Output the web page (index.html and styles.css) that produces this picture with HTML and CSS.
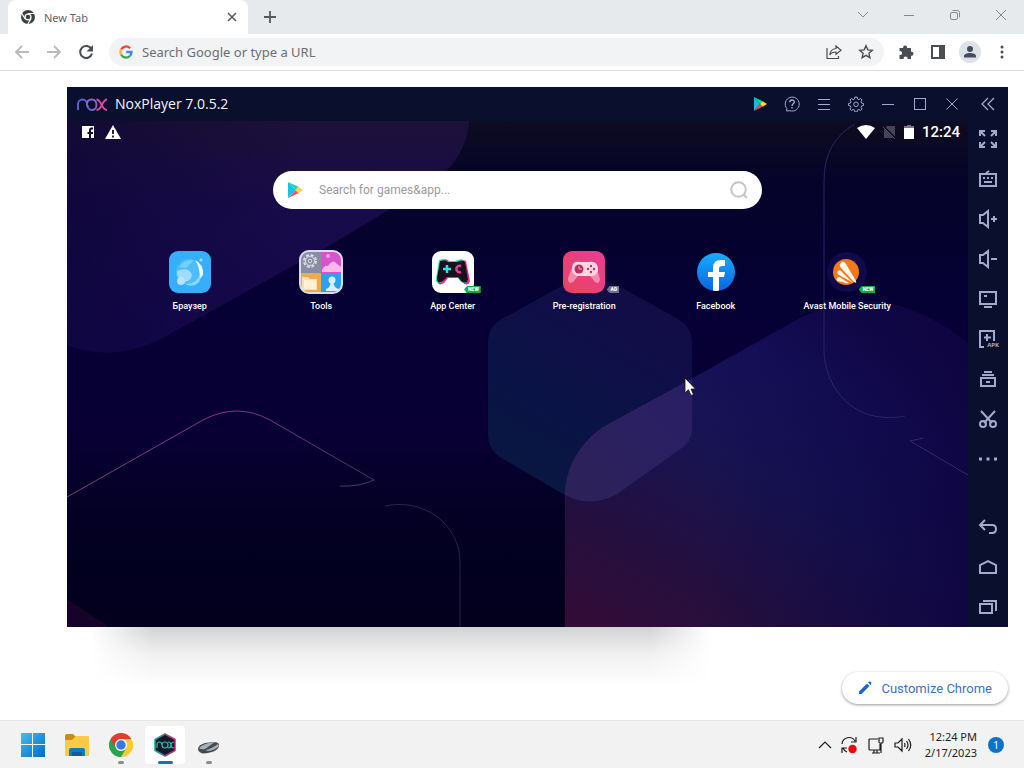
FILE: index.html
```html
<!DOCTYPE html>
<html lang="en">
<head>
  <meta charset="UTF-8" />
  <meta name="viewport" content="width=device-width, initial-scale=1.0"/>
  <title>New Tab</title>
  <link rel="stylesheet" href="styles.css">
</head>
<body>
  <header class="tabstrip">
    <div class="tab">
      <svg width="16" height="16" viewBox="0 0 16 16"><circle cx="8" cy="8" r="7" fill="#3c4043"/><path d="M8 4.500h6.500M5 9.800L1.700 4.200M11 9.800L7.800 15" stroke="#fff" stroke-width="1.200"/><circle cx="8" cy="8" r="3.600" fill="#fff"/><circle cx="8" cy="8" r="2.300" fill="#3c4043"/></svg>
      <span class="tab-title">New Tab</span>
      <button class="tab-close" aria-label="Close tab"><svg width="10" height="10" viewBox="0 0 10 10" stroke="#55595d" stroke-width="1.500"><path d="M1 1l8 8M9 1L1 9"/></svg></button>
    </div>
    <button class="tab-new" aria-label="New tab"><svg width="14" height="14" viewBox="0 0 14 14" stroke="#55595d" stroke-width="1.800"><path d="M7 1v12M1 7h12"/></svg></button>
    <div class="window-buttons">
      <button aria-label="Search tabs"><svg width="12" height="12" viewBox="0 0 12 12"><path d="M1 3l5 5 5-5"/></svg></button>
      <button aria-label="Minimize"><svg width="12" height="12" viewBox="0 0 12 12"><path d="M1 6.500h10"/></svg></button>
      <button aria-label="Restore"><svg width="12" height="12" viewBox="0 0 12 12"><rect x="1.500" y="3.500" width="7" height="7" rx="1.500"/><path d="M3.500 1.500h5a2 2 0 0 1 2 2v5"/></svg></button>
      <button aria-label="Close"><svg width="12" height="12" viewBox="0 0 12 12"><path d="M1 1l10 10M11 1L1 11"/></svg></button>
    </div>
  </header>

  <nav class="toolbar">
    <button aria-label="Back"><svg width="16" height="16" viewBox="0 0 16 16" fill="none" stroke="#b8babd" stroke-width="1.800"><path d="M15 8H2M8 2L2 8l6 6"/></svg></button>
    <button aria-label="Forward"><svg width="16" height="16" viewBox="0 0 16 16" fill="none" stroke="#b8babd" stroke-width="1.800"><path d="M1 8h13M8 2l6 6-6 6"/></svg></button>
    <button aria-label="Reload"><svg width="16" height="16" viewBox="0 0 16 16"><path d="M13.400 5A6 6 0 1 0 14 9.500" fill="none" stroke="#4a4d51" stroke-width="2"/><path d="M15 1v6.500H8.500z" fill="#4a4d51"/></svg></button>
    <div class="omnibox">
      <svg width="14" height="14" viewBox="0 0 14 14" fill="none" stroke-width="2.300"><path d="M2.200 4.300A5.500 5.500 0 0 1 11 3.200" stroke="#ea4335"/><path d="M2.200 9.700a5.500 5.500 0 0 1 0-5.400" stroke="#fbbc05"/><path d="M10.800 11a5.500 5.500 0 0 1-8.600-1.300" stroke="#34a853"/><path d="M7.200 7h5.300a5.500 5.500 0 0 1-1.700 4" stroke="#4285f4"/></svg>
      <input type="text" aria-label="Address" placeholder="Search Google or type a URL">
      <button aria-label="Share"><svg width="16" height="16" viewBox="0 0 16 16" fill="none" stroke="#4a4d51" stroke-width="1.200"><path d="M1 4v10.500h11.500V12"/><path d="M10 2l5 4.200-5 4V8C7 8 5 9 3.800 11 4 7.500 6 5 10 4.500z"/></svg></button>
      <button aria-label="Bookmark"><svg width="16" height="16" viewBox="0 0 16 16" fill="none" stroke="#4a4d51" stroke-width="1.400"><path d="M8 1.800l1.800 4.100 4.500.4-3.400 3 1 4.400L8 11.400l-3.900 2.300 1-4.400-3.400-3 4.500-.4z"/></svg></button>
    </div>
    <button aria-label="Extensions"><svg width="16" height="16" viewBox="0 0 16 16" fill="#4a4d51"><path d="M2 4h3.200a2 2 0 1 1 3.800 0h4v3.800a2 2 0 1 1 0 3.900V15H9.500a2 2 0 1 0-3.800 0H1.500v-4a2 2 0 1 0 0-3.800V4z"/></svg></button>
    <button aria-label="Side panel"><svg width="16" height="16" viewBox="0 0 16 16"><path d="M1 1h14v14H1zM3 3v10h6V3z" fill="#4a4d51" fill-rule="evenodd"/></svg></button>
    <button class="avatar" aria-label="Profile"><svg width="14" height="14" viewBox="0 0 14 14" fill="#454d5c"><circle cx="7" cy="4" r="3"/><path d="M1 12.500V11c0-2 3-3 6-3s6 1 6 3v1.500z"/></svg></button>
    <button aria-label="Menu"><svg width="4" height="16" viewBox="0 0 4 16" fill="#4a4d51"><circle cx="2" cy="3" r="1.500"/><circle cx="2" cy="8" r="1.500"/><circle cx="2" cy="13" r="1.500"/></svg></button>
  </nav>

  <main>
    <section class="nox">
      <div class="nox-titlebar">
        <svg width="31" height="13" viewBox="0 0 31 13" fill="none" stroke-width="1.900"><path d="M1 12V6a4.500 4.500 0 0 1 9 0c0 3 2 6 5 6" stroke="#5967d0"/><path d="M15 12c6 0 6-10.500 0-10.500S9.500 7 11 9" stroke="#8e62c4"/><path d="M19.500 1.500c5 0 5 10.500 10.500 10.500M30 1.500c-5 0-5 10.500-10.500 10.500" stroke="#e04a9a"/></svg>
        <h1>NoxPlayer 7.0.5.2</h1>
        <div class="nox-actions">
          <button aria-label="Play store"><svg width="14" height="14" viewBox="0 0 14 14"><path d="M1 0v14l6-7z" fill="#19b9e8"/><path d="M1 0l9.500 4.700L7 7z" fill="#19d59b"/><path d="M1 14l9.500-4.700L7 7z" fill="#ef4555"/><path d="M10 4.500L14 7l-4 2.500L7 7z" fill="#f7dc32"/></svg></button>
          <button aria-label="Help"><svg width="16" height="16" viewBox="0 0 16 16"><path d="M2.500 15l.3-2.500A7 7 0 1 1 6 14.700z"/><path d="M5.800 6.300c0-3 4.500-3 4.500-.3C10.300 8 8 7.500 8 10M8 11v1.500" stroke-width="1.400"/></svg></button>
          <button aria-label="Menu"><svg width="16" height="16" viewBox="0 0 16 16"><path d="M2 3.500h12M2 8.500h12M2 13.500h12"/></svg></button>
          <button aria-label="Settings"><svg width="16" height="16" viewBox="0 0 16 16"><path d="M6.900 1h2.200l.4 2 1.400.6 1.700-1.100 1.500 1.500-1.100 1.700.6 1.400 2 .4v2l-2 .4-.6 1.400 1.100 1.700-1.500 1.500-1.700-1.100-1.400.6-.4 2H6.900l-.4-2-1.400-.6-1.700 1.100-1.500-1.500L3 11.300l-.6-1.400-2-.4v-2l2-.4L3 5.700 1.900 4l1.500-1.500 1.700 1.100L6.500 3z"/><circle cx="8" cy="8.300" r="2.300"/></svg></button>
          <button aria-label="Minimize"><svg width="14" height="14" viewBox="0 0 14 14"><path d="M1 7.500h12"/></svg></button>
          <button aria-label="Maximize"><svg width="14" height="14" viewBox="0 0 14 14"><rect x="1.500" y="1.500" width="11" height="11"/></svg></button>
          <button aria-label="Close"><svg width="14" height="14" viewBox="0 0 14 14"><path d="M1.500 1.500l11 11M12.500 1.500l-11 11"/></svg></button>
          <button class="collapse" aria-label="Collapse sidebar"><svg width="16" height="14" viewBox="0 0 16 14" stroke-width="1.300"><path d="M8 1L2 7l6 6M14 1L8 7l6 6"/></svg></button>
        </div>
      </div>

      <div class="screen">
        <svg class="wallpaper" viewBox="0 0 901 506" preserveAspectRatio="none" fill="none">
          <defs>
            <linearGradient id="base" x1="0" y1="0" x2="0" y2="1">
              <stop offset="0" stop-color="#0e0c20"/><stop offset=".12" stop-color="#050329"/><stop offset=".4" stop-color="#060036"/><stop offset=".62" stop-color="#080033"/><stop offset=".8" stop-color="#030022"/><stop offset="1" stop-color="#02001c"/>
            </linearGradient>
            <linearGradient id="corner" x1="0" y1="0" x2="0" y2="1">
              <stop offset="0" stop-color="#1c1138"/><stop offset=".35" stop-color="#180b49"/><stop offset="1" stop-color="#150850"/>
            </linearGradient>
            <linearGradient id="cornerShade"><stop offset="0" stop-color="#08022f" stop-opacity=".45"/><stop offset=".6" stop-color="#08022f" stop-opacity="0"/></linearGradient>
            <linearGradient id="hex" x1=".7" y1="0" x2=".2" y2="1"><stop offset="0" stop-color="#140b47"/><stop offset=".6" stop-color="#0a1346"/><stop offset="1" stop-color="#09183f"/></linearGradient>
            <linearGradient id="big" x1="0" y1="1" x2=".6" y2="0"><stop offset="0" stop-color="#340c36"/><stop offset=".25" stop-color="#240f3e"/><stop offset=".55" stop-color="#171452"/><stop offset=".8" stop-color="#160f5a"/><stop offset="1" stop-color="#120648"/></linearGradient>
            <linearGradient id="bigRight"><stop offset=".35" stop-color="#0c0a44" stop-opacity="0"/><stop offset="1" stop-color="#0e0440" stop-opacity=".85"/></linearGradient>
            <linearGradient id="overlap" x1="0" y1="1" x2="1" y2="0"><stop offset="0" stop-color="#2e2453"/><stop offset="1" stop-color="#281c6c"/></linearGradient>
            <linearGradient id="peak"><stop offset="0" stop-color="#784064"/><stop offset=".5" stop-color="#8a338c"/><stop offset="1" stop-color="#493661"/></linearGradient>
            <clipPath id="bigClip"><path d="M498 506V375C498 345 515 320 536 306L626 257 726 201Q780 172 820 182 860 190 901 222V506z"/></clipPath>
          </defs>
          <rect width="901" height="506" fill="url(#base)"/>
          <path d="M0 0H402C400 35 375 64 320 90L260 126 150 187 106 211Q52 244 0 224z" fill="url(#corner)"/>
          <path d="M0 0H402C400 35 375 64 320 90L260 126 150 187 106 211Q52 244 0 224z" fill="url(#cornerShade)"/>
          <path d="M421 222Q421 206 435 198L491 167Q523 150 555 167L611 198Q625 206 625 222V308Q625 321 612 329L550 373Q523 388 496 373L433 336Q421 328 421 312z" fill="url(#hex)"/>
          <g clip-path="url(#bigClip)">
            <rect x="498" y="160" width="403" height="346" fill="url(#big)"/>
            <rect x="498" y="160" width="403" height="346" fill="url(#bigRight)"/>
            <path d="M421 222Q421 206 435 198L491 167Q523 150 555 167L611 198Q625 206 625 222V308Q625 321 612 329L550 373Q523 388 496 373L433 336Q421 328 421 312z" fill="url(#overlap)"/>
          </g>
          <path d="M0 506V478L42 506z" fill="#17022a"/>
          <path d="M0 376L136 299Q170 281 203 299L307 359Q292 366 273 365" stroke="url(#peak)"/>
          <path d="M318 385C360 376 393 407 393 440V506" stroke="#28254d"/>
          <path d="M788 3Q757 20 757 60V228C757 265 785 305 838 295" stroke="#2b2560"/>
          <path d="M901 354L843 320 856 317" stroke="#372868"/>
        </svg>

        <div class="statusbar">
          <svg width="12" height="12" viewBox="0 0 12 12"><path d="M0 0h12v12H9V8h2V6H9V4.500c0-.8.300-1 1-1h1V1.500H9.500C7.500 1.500 7 3 7 4v2H5.500v2H7v4H0z" fill="#fff"/></svg>
          <svg width="16" height="14" viewBox="0 0 16 14"><path d="M8 0l8 14H0z" fill="#fff"/><path d="M8 5v4M8 10.500v2" stroke="#0d0c2a" stroke-width="1.800"/></svg>
          <div class="status-right">
            <svg width="18" height="14" viewBox="0 0 18 14"><path d="M0 3Q9-3 18 3L9 14z" fill="#fff"/></svg>
            <svg width="13" height="14" viewBox="0 0 13 14"><path d="M4 1h8v12H1V5z" fill="#45435a"/><path d="M0 1l13 13" stroke="#0b0a20" stroke-width="2"/><path d="M0 2l12 12" stroke="#55536a"/></svg>
            <svg width="10" height="14" viewBox="0 0 10 14"><path d="M3 0h4v1h3v3H0V1h3z" fill="#777589"/><path d="M0 3h10v11H0z" fill="#fff"/></svg>
            <time>12:24</time>
          </div>
        </div>

        <form class="search">
          <svg width="16" height="16" viewBox="0 0 16 16"><path d="M1 0v16l8-8z" fill="#13c5e8"/><path d="M1 0l11 5-3 3z" fill="#1cd5b5"/><path d="M1 16l11-5-3-3z" fill="#ec5262"/><path d="M11 4.700L16 8l-5 3.300L8.500 8z" fill="#fbd34a"/></svg>
          <input type="text" aria-label="Search for games and apps" placeholder="Search for games&amp;app...">
          <button aria-label="Search"><svg width="18" height="18" viewBox="0 0 18 18" fill="none" stroke="#c6c4c4" stroke-width="2"><circle cx="8.500" cy="8.500" r="7.300"/><path d="M13 13l4 4"/></svg></button>
        </form>

        <div class="apps">
          <button class="app">
            <span class="app-icon"><svg width="42" height="42" viewBox="0 0 42 42"><rect width="42" height="42" rx="9" fill="#35aefc"/><circle cx="20" cy="21" r="13" fill="#4fbcff"/><path d="M10 16Q15 8 25 9L17 17z" fill="#74d0ff"/><path d="M26 9Q35 13 34 24L31 28Q31 16 26 9z" fill="#e8faff"/><path d="M8 20Q20 15 23 24 22 31 14 31 7 27 8 20z" fill="#9fdcff"/><path d="M16 33Q28 34 31 22 33 31 26 34 21 36 16 33z" fill="#8ed8ff"/><circle cx="12" cy="30" r="4" fill="#b4e4ff"/><circle cx="32" cy="9" r="1.500" fill="#9edfff"/></svg></span>
            Браузер
          </button>
          <button class="app">
            <span class="app-icon"><svg width="44" height="44" viewBox="0 0 44 44"><defs><clipPath id="folder"><rect x="1" y="1" width="42" height="42" rx="9"/></clipPath></defs><g clip-path="url(#folder)"><path fill="#898da3" d="M0 0h22v23H0z"/><path fill="#d655cb" d="M22 0h22v23H22z"/><path fill="#efaa4f" d="M0 23h22v21H0z"/><path fill="#2ca2ef" d="M22 23h22v21H22z"/><circle cx="11" cy="11" r="6" fill="none" stroke="#d9dbe3" stroke-width="2" stroke-dasharray="3 1.700"/><circle cx="11" cy="11" r="4.500" fill="none" stroke="#d9dbe3"/><circle cx="11" cy="11" r="1.800" fill="none" stroke="#d9dbe3"/><path d="M23 20Q26 15 29 16 34 8 38 14L44 18V22H23z" fill="#fbb9e7"/><circle cx="29" cy="6" r="2" fill="#f6a4df"/><path d="M3 27h6l2 2h7v11H3z" fill="#ffe0ab"/><path d="M5 30h12v9H5z" fill="#fff0d6"/><circle cx="33" cy="30" r="3.500" fill="#d5f0ff"/><path d="M27 39Q31 38 31.500 33h3Q35 38 40 39v2H27z" fill="#d5f0ff"/></g><rect x="1" y="1" width="42" height="42" rx="9" fill="none" stroke="#dcdaec" stroke-width="2"/></svg></span>
            Tools
          </button>
          <button class="app">
            <span class="app-icon"><svg width="42" height="42" viewBox="0 0 42 42"><rect width="42" height="42" rx="9" fill="#fff"/><path d="M9 9Q15 7 17 10H25Q29 7 34 10L38 30Q36 36 31 32L27 27H16L12 32Q6 36 5 29z" fill="#f42787"/><path d="M7 9Q13 7 15 10H23Q28 7 32 10L36 29Q34 34 29 31L25 26H14L10 31Q4 34 4 28z" fill="#27dfba"/><path d="M8 10Q14 8 16 11H25Q30 8 33 11L36 28Q35 34 29 30L26 26H15L11 30Q5 34 5 27z" fill="#16131c"/><path d="M15 14v8M11 18h8" stroke="#42d8e7" stroke-width="2.500"/><path d="M29 15a3.300 3.300 0 1 0 0 6" fill="none" stroke="#ee379c" stroke-width="2.500"/></svg><span class="badge">NEW</span></span>
            App Center
          </button>
          <button class="app">
            <span class="app-icon"><svg width="42" height="42" viewBox="0 0 42 42"><defs><linearGradient id="pink" x1="1" y1="0" x2="0" y2="1"><stop stop-color="#eb3c96"/><stop offset="1" stop-color="#e74460"/></linearGradient></defs><rect width="42" height="42" rx="9" fill="url(#pink)"/><path d="M11 12Q15 9 19 12H24Q28 9 32 12L37 28Q36 34 32 31L27 25H15L10 31Q5 34 5 27z" fill="#f58bad"/><path d="M13 11H30Q35 12 35 18T29 25H15Q9 24 9 18T13 11z" fill="#fdd8e2"/><circle cx="16" cy="18" r="4.500" fill="#b73061"/><path d="M16 15v3h3" stroke="#f5a1b9" fill="none"/><g fill="#bf3060"><circle cx="28" cy="15" r="1.200"/><circle cx="25" cy="18" r="1.200"/><circle cx="31" cy="18" r="1.200"/><circle cx="28" cy="21" r="1.200"/></g></svg><span class="badge ad">AD</span></span>
            Pre-registration
          </button>
          <button class="app">
            <span class="app-icon"><svg width="40" height="40" viewBox="0 0 40 40"><defs><linearGradient id="fb" x1="0" y1="0" x2="0" y2="1"><stop stop-color="#18acfe"/><stop offset="1" stop-color="#0866df"/></linearGradient><clipPath id="fbClip"><circle cx="20" cy="20" r="19"/></clipPath></defs><circle cx="20" cy="20" r="19" fill="url(#fb)"/><path clip-path="url(#fbClip)" d="M17 40V25H12V20H17V16Q17 8 25 8H29V14H26Q23 14 23 17V20H29L28 25H23V40z" fill="#fff"/></svg></span>
            Facebook
          </button>
          <button class="app">
            <span class="app-icon"><svg width="42" height="42" viewBox="0 0 42 42"><circle cx="21" cy="21" r="20" fill="#100b48"/><circle cx="20" cy="21" r="13" fill="#f47919"/><path d="M14 13Q17 8 20 13L30 30Q31 33 28 31L16 18Q13 15 14 13zM12 20Q14 18 17 22L27 32Q19 27 13 24 10 22 12 20zM11 27Q13 25 15 27L23 32Q19 33 17 31L11 30Q10 28 11 27z" fill="#fff5e8"/></svg><span class="badge">NEW</span></span>
            Avast Mobile Security
          </button>
        </div>

        <svg class="cursor" width="12" height="20" viewBox="0 0 12 20"><path d="M1 1v15l3.500-3.300L7 18.500l2.500-1L7 12h4.500z" fill="#fff" stroke="#111" stroke-width=".8"/></svg>
      </div>

      <aside class="sidebar">
        <div class="tools">
          <button aria-label="Full screen"><svg width="20" height="20" viewBox="0 0 20 20"><path d="M2 7V2h5M2 2l5 5M13 2h5v5M18 2l-5 5M2 13v5h5M2 18l5-5M13 18h5v-5M18 18l-5-5"/></svg></button>
          <button aria-label="Keyboard"><svg width="20" height="20" viewBox="0 0 20 20"><path d="M2 5h16v12H2zM8 4l3-2M5 9h2M9 9h2M13 9h2M6 13h8"/></svg></button>
          <button aria-label="Volume up"><svg width="20" height="20" viewBox="0 0 20 20"><path d="M2 6h3l5-4v16l-5-4H2zM13 10h6M16 7v6"/></svg></button>
          <button aria-label="Volume down"><svg width="20" height="20" viewBox="0 0 20 20"><path d="M2 6h3l5-4v16l-5-4H2zM13 10h6"/></svg></button>
          <button aria-label="Screenshot"><svg width="20" height="20" viewBox="0 0 20 20"><path d="M2 3h16v12H2zM6 7h3M6 18h8"/></svg></button>
          <button class="apk" aria-label="Install APK"><svg width="20" height="20" viewBox="0 0 20 20"><path d="M6 18H2V2h14v10M9 5v7M6 8.500h7"/></svg><span>APK</span></button>
          <button aria-label="Multi-instance"><svg width="20" height="20" viewBox="0 0 20 20"><path d="M3 9h14v8H3zM4 6h12M6 3h8M8 13h4"/></svg></button>
          <button aria-label="Cut"><svg width="20" height="20" viewBox="0 0 20 20"><path d="M3 2l11 12M17 2L6 14"/><circle cx="5" cy="15" r="3"/><circle cx="15" cy="15" r="3"/></svg></button>
          <button aria-label="More"><svg width="20" height="20" viewBox="0 0 20 20"><path d="M1 10h3M8.500 10h3M16 10h3" stroke-width="3"/></svg></button>
        </div>
        <div class="keys">
          <button aria-label="Back"><svg width="20" height="20" viewBox="0 0 20 20"><path d="M7 3L2 8l5 5M2 8h12q4 0 4 4v0q0 4-4 4h-3"/></svg></button>
          <button aria-label="Home"><svg width="20" height="20" viewBox="0 0 20 20"><path d="M2 16V8l8-4 8 4v8z"/></svg></button>
          <button aria-label="Recent"><svg width="20" height="20" viewBox="0 0 20 20"><path d="M2 7h12v9H2zM5 4h13v10"/></svg></button>
        </div>
      </aside>
    </section>

    <div class="page-foot">
      <div class="doodle-shadow"></div>
      <button class="customize"><svg width="14" height="14" viewBox="0 0 14 14" fill="#1967d2"><path d="M1 10.500L9 2.500l2.500 2.500-8 8H1zM10 1.500L11.300.5q.7-.3 1.200.2l.8.8q.5.6 0 1.200L12.500 4z"/></svg>Customize Chrome</button>
    </div>
  </main>

  <footer class="taskbar">
    <div class="pinned">
      <button aria-label="Start"><svg width="24" height="24" viewBox="0 0 24 24"><defs><linearGradient id="win" x1="0" y1="0" x2="1" y2="1"><stop stop-color="#43bdf2"/><stop offset="1" stop-color="#0869c4"/></linearGradient></defs><path d="M0 0h11v11H0zM12 0h12v11H12zM0 12h11v12H0zM12 12h12v12H12z" fill="url(#win)"/></svg></button>
      <button aria-label="File Explorer"><svg width="26" height="24" viewBox="0 0 26 24"><path d="M1 3q0-2 2-2h6l3 3-4 4H1z" fill="#c98a1c"/><path d="M1 7h7l4-4h12q1 0 1 1v18q0 1-1 1H2q-1 0-1-1z" fill="#fbcb48"/><path d="M5 17q0-2 2-2h12q2 0 2 2v6H5z" fill="#1678bd"/><path d="M8 19h10v4H8z" fill="#0c5d9b"/></svg></button>
      <button class="running" aria-label="Chrome"><svg width="24" height="24" viewBox="0 0 24 24"><path d="M12 12L1.600 6A12 12 0 0 1 22.400 6z" fill="#e33b2e"/><path d="M12 12L1.600 6A12 12 0 0 0 12 24z" fill="#2ba24c"/><path d="M12 12L12 24A12 12 0 0 0 22.400 6H12z" fill="#fcc934"/><path d="M6.800 15L1.600 6H12v1z" fill="#e33b2e"/><path d="M6.500 15L12 18l5.200-3L12 24z" fill="#2ba24c"/><circle cx="12" cy="12" r="6" fill="#fff"/><circle cx="12" cy="12" r="4.700" fill="#3478e5"/></svg></button>
      <button class="running active" aria-label="NoxPlayer"><svg width="24" height="24" viewBox="0 0 24 24" fill="none"><defs><linearGradient id="rim"><stop stop-color="#16a99b"/><stop offset="1" stop-color="#cb236f"/></linearGradient></defs><path d="M12 1l10 5.500v11L12 23 2 17.500v-11z" fill="#111a2b" stroke="url(#rim)" stroke-width="1.500" stroke-linejoin="round"/><path d="M4 15v-3q0-3 2.500-3T9 12t3 3 3-3-3-3-3 3M15 9q3 0 3 3t3 3M21 9q-3 0-3 3t-3 3" stroke="#28bda7" stroke-width="1.200"/></svg></button>
      <button class="running" aria-label="Mouse tool"><svg width="24" height="24" viewBox="0 0 24 24"><path d="M1 16Q1 12 8 10l8-1q7 0 6 4-1 4-7 6-13 4-14-3z" fill="#424b53"/><path d="M2 15Q7 10 18 9L8 16q-4 1-6-1zM9 17q5-1 12-6l1 2q-5 5-12 5z" fill="#a9b1b8"/></svg></button>
    </div>
    <div class="tray">
      <button aria-label="Show hidden icons"><svg width="14" height="14" viewBox="0 0 14 14"><path d="M1 10l6-6 6 6"/></svg></button>
      <button aria-label="Updates"><svg width="18" height="18" viewBox="0 0 18 18"><path d="M2 8a7 7 0 0 1 13-3M16 1v5h-5M7 16a7 7 0 0 1-4-4M2 17v-5h5"/><circle cx="12.500" cy="13" r="4.200" fill="#f00" stroke="none"/></svg></button>
      <button class="net" aria-label="Network"><svg width="18" height="18" viewBox="0 0 18 18"><path d="M11 3H3q-1 0-1 1v9q0 1 1 1h10V8M5 17h8M7 14v3M10 14v3M12 2h4v4q0 1-1 1h-2q-1 0-1-1zM14 7v10"/></svg></button>
      <button aria-label="Volume"><svg width="18" height="18" viewBox="0 0 18 18"><path d="M1 7h3l4-4v12l-4-4H1zM10.500 7q1 2 0 4M12.500 5q3 4 0 8M14.500 3q4.500 6 0 12"/></svg></button>
      <time>12:24 PM<br>2/17/2023</time>
      <button class="notify" aria-label="Notifications">1</button>
    </div>
  </footer>
</body>
</html>
```
FILE: styles.css
```css
:root {
  --ui: "Noto Sans", "Open Sans", sans-serif;
  --strip: #e7eaed;
  --field: #f1f3f4;
  --nox-bar: #0a0f2e;
  --nox-icon: #a5a9cc;
}

* {
  box-sizing: border-box;
  margin: 0;
  padding: 0;
}

body {
  min-height: 100vh;
  display: flex;
  flex-direction: column;
  background: #fff;
  font-family: var(--ui);
}

button {
  display: flex;
  align-items: center;
  justify-content: center;
  border: none;
  background: none;
  font-family: inherit;
  cursor: pointer;
}

input {
  flex: 1;
  min-width: 0;
  border: none;
  outline: none;
  background: none;
  font-family: inherit;
}

svg {
  flex-shrink: 0;
}

/* browser */
.tabstrip {
  height: 34px;
  display: flex;
  padding-left: 8px;
  background: var(--strip);
}

.tab {
  width: 240px;
  display: flex;
  align-items: center;
  gap: 8px;
  padding: 0 8px 0 12px;
  background: #fff;
  border-radius: 8px 8px 0 0;
}

.tab-title {
  flex: 1;
  font-size: 11px;
  color: #5f6368;
}

.tab-close {
  width: 16px;
  height: 16px;
}

.tab-new {
  width: 44px;
}

.window-buttons {
  display: flex;
  margin-left: auto;
  padding-bottom: 5px;
}

.window-buttons button {
  width: 46px;
}

.window-buttons svg {
  fill: none;
  stroke: #85888c;
}

.toolbar {
  height: 37px;
  display: flex;
  align-items: center;
  padding: 0 6px;
  border-bottom: 1px solid #dadce0;
}

.toolbar button {
  width: 32px;
  height: 28px;
}

.omnibox {
  flex: 1;
  height: 28px;
  display: flex;
  align-items: center;
  margin: 0 6px 0 7px;
  padding: 0 2px 0 10px;
  border-radius: 14px;
  background: var(--field);
}

.omnibox input {
  margin-left: 9px;
  font-size: 13px;
}

.omnibox input::placeholder {
  color: #6b6f73;
}

.toolbar .avatar {
  width: 22px;
  height: 22px;
  margin: 0 5px;
  border-radius: 50%;
  background: #dde1e8;
}

/* page */
main {
  flex: 1;
  display: flex;
  flex-direction: column;
  padding: 16px 16px 0 67px;
}

.page-foot {
  height: 93px;
  display: flex;
  align-items: flex-end;
  justify-content: space-between;
  padding-bottom: 16px;
}

.doodle-shadow {
  width: 66%;
  height: 60px;
  margin: 0 0 17px 24px;
  background: linear-gradient(#d2d3d3, #f0f0f0 45%, #fff);
  mask-image: linear-gradient(90deg, transparent, #000 10%, #000 90%, transparent);
}

.customize {
  height: 32px;
  gap: 9px;
  padding: 0 16px;
  border-radius: 16px;
  background: #fff;
  box-shadow: 0 1px 3px rgba(0, 0, 0, 0.4);
  font-family: Roboto, sans-serif;
  font-size: 13px;
  color: #4270c4;
}

/* emulator window */
.nox {
  flex: 1;
  display: grid;
  grid-template-columns: 1fr 40px;
  grid-template-rows: 34px 1fr;
  background: var(--nox-bar);
}

.nox-titlebar {
  grid-column: 1 / -1;
  display: flex;
  align-items: center;
  gap: 7px;
  padding-left: 10px;
}

.nox-titlebar h1 {
  font-family: "Open Sans", sans-serif;
  font-size: 14px;
  font-weight: 400;
  line-height: 20px;
  color: #f4f5fa;
}

.nox-actions {
  display: flex;
  margin-left: auto;
}

.nox-actions button {
  width: 32px;
  height: 32px;
}

.nox-actions .collapse {
  width: 40px;
}

.nox-actions svg {
  fill: none;
  stroke: var(--nox-icon);
}

.nox-actions button:first-child svg {
  stroke: none;
}

.screen {
  position: relative;
  overflow: hidden;
  font-family: Roboto, sans-serif;
}

.wallpaper {
  position: absolute;
  inset: 0;
  width: 100%;
  height: 100%;
}

.statusbar,
.search,
.apps {
  position: relative;
}

.statusbar {
  height: 22px;
  display: flex;
  align-items: center;
  gap: 11px;
  padding: 0 8px 0 15px;
}

.status-right {
  display: flex;
  align-items: center;
  gap: 8px;
  margin-left: auto;
}

.status-right time {
  font-size: 15px;
  font-weight: 500;
  color: #fff;
}

.search {
  width: 489px;
  max-width: 90%;
  height: 38px;
  display: flex;
  align-items: center;
  gap: 16px;
  margin: 28px auto 0;
  padding: 0 14px;
  border-radius: 19px;
  background: #fff;
}

.search input {
  font-size: 12px;
}

.search input::placeholder {
  color: #9b9b9b;
}

.apps {
  display: grid;
  grid-template-columns: repeat(6, 1fr);
  margin: 41px 55px 0 57px;
}

.app {
  flex-direction: column;
  gap: 5px;
  color: #fff;
  font-size: 9px;
  font-weight: 500;
  line-height: 14px;
  white-space: nowrap;
}

.app-icon {
  position: relative;
  width: 44px;
  height: 44px;
  display: flex;
  align-items: center;
  justify-content: center;
}

.badge {
  position: absolute;
  right: -6px;
  bottom: 1px;
  padding: 0 2px 0 4px;
  background: #0bad44;
  clip-path: polygon(3px 0, 100% 0, 100% 100%, 3px 100%, 0 50%);
  font-size: 5px;
  font-weight: 900;
  line-height: 7px;
}

.badge.ad {
  right: -13px;
  background: #73718f;
}

.cursor {
  position: absolute;
  left: 617px;
  top: 256px;
}

.sidebar {
  display: flex;
  flex-direction: column;
  justify-content: space-between;
  padding-bottom: 2px;
}

.tools,
.keys {
  display: grid;
  gap: 4px;
}

.sidebar button {
  position: relative;
  height: 36px;
}

.sidebar svg {
  fill: none;
  stroke: var(--nox-icon);
  stroke-width: 2;
}

.apk span {
  position: absolute;
  right: 9px;
  bottom: 8px;
  font-size: 6px;
  font-weight: 700;
  line-height: 7px;
  color: var(--nox-icon);
}

/* taskbar */
.taskbar {
  height: 48px;
  display: flex;
  align-items: center;
  justify-content: space-between;
  padding: 0 20px 0 13px;
  background: #f2f2f2;
  border-top: 1px solid #e6e6e6;
}

.pinned,
.tray {
  display: flex;
  align-items: center;
}

.pinned {
  gap: 4px;
}

.pinned button {
  position: relative;
  width: 40px;
  height: 38px;
  border-radius: 4px;
}

.pinned .active {
  background: #fff;
}

.pinned .running::after {
  content: "";
  position: absolute;
  bottom: 0;
  width: 6px;
  height: 3px;
  border-radius: 2px;
  background: #8b8b8b;
}

.pinned .active::after {
  width: 15px;
  background: #1670bd;
}

.tray button {
  width: 24px;
  height: 32px;
}

.tray .net {
  width: 30px;
}

.tray svg {
  fill: none;
  stroke: #1c1c1c;
  stroke-width: 1.2;
}

.tray time {
  margin: 0 11px 0 10px;
  font-size: 11px;
  line-height: 16px;
  text-align: right;
  color: #222;
}

.tray .notify {
  width: 16px;
  height: 16px;
  border-radius: 50%;
  background: #0b74c9;
  font-size: 10px;
  color: #fff;
}
```
